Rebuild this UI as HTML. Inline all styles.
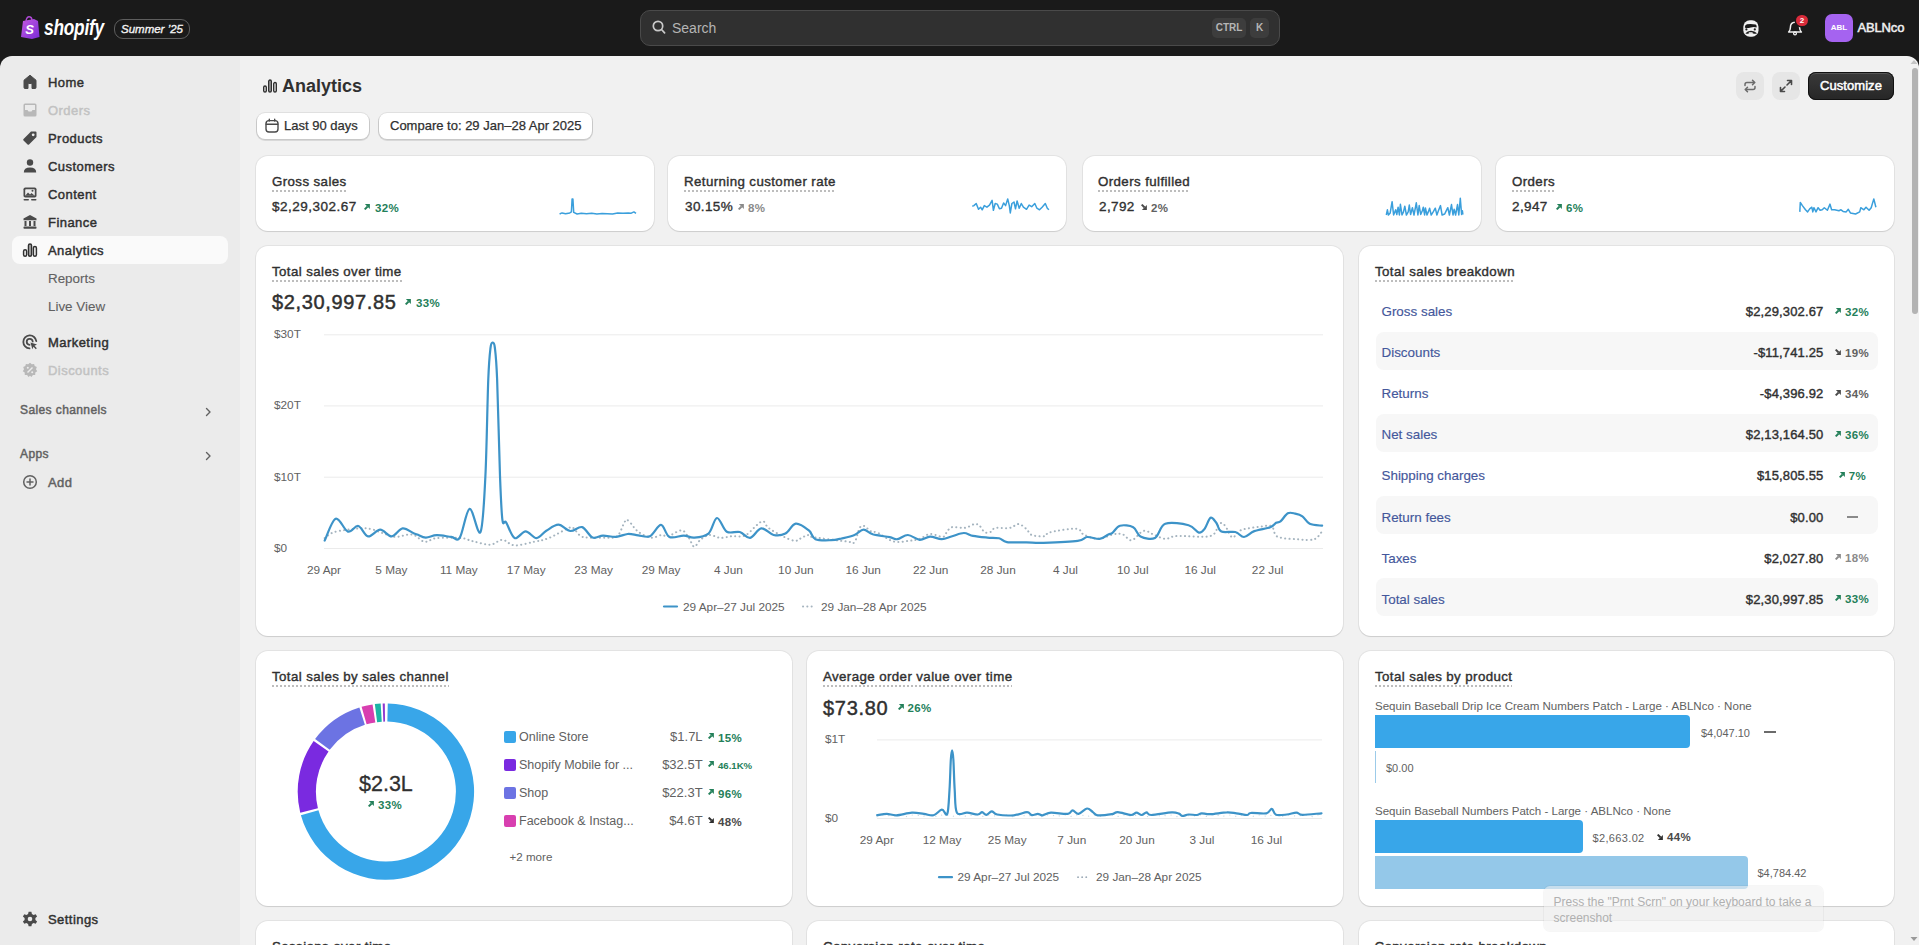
<!DOCTYPE html>
<html><head><meta charset="utf-8">
<style>
*{box-sizing:border-box;margin:0;padding:0}
html,body{width:1919px;height:945px;overflow:hidden;background:#1a1a1a;font-family:"Liberation Sans",sans-serif;color:#303030}
.abs{position:absolute}
.t{position:absolute;white-space:nowrap;line-height:16px}
#top{position:absolute;left:0;top:0;width:1919px;height:56px;background:#1a1a1a}
#side{position:absolute;left:0;top:56px;width:240px;height:889px;background:#ebebeb;border-top-left-radius:12px}
#main{position:absolute;left:240px;top:56px;width:1679px;height:889px;background:#f1f1f1;border-top-right-radius:12px;overflow:hidden}
#pg{position:absolute;left:-240px;top:-56px;width:1919px;height:945px}
.nav{position:absolute;left:12px;width:216px;height:28px;border-radius:8px}
.nav .ic{position:absolute;left:8px;top:4px;width:20px;height:20px}
.nav .tx{position:absolute;left:36px;top:1px;line-height:28px;font-size:13px;color:#303030;-webkit-text-stroke:0.45px currentColor;letter-spacing:0.45px;white-space:nowrap}
.nav.dis .tx{color:#c2c2c2}
.nav.sub .tx{color:#616161;font-size:13.4px;-webkit-text-stroke:0.1px currentColor;letter-spacing:0}
.sel{background:#fafafa}
.card{position:absolute;background:#fff;border-radius:12px;box-shadow:0 0 0 1px rgba(0,0,0,.055),0 1px 1px 0 rgba(0,0,0,.10)}
.ttl{position:absolute;white-space:nowrap;font-size:13.3px;letter-spacing:0.4px;-webkit-text-stroke:0.4px #303030;color:#303030;line-height:16px;background-image:linear-gradient(90deg,#bdbdbd 50%,transparent 50%);background-size:4px 1.5px;background-repeat:repeat-x;background-position:0 15.5px;padding-bottom:3px}
.grn{color:#24805a}
.g6{color:#616161}
.pct{position:absolute;white-space:nowrap;font-size:11.5px;font-weight:bold;line-height:14px;letter-spacing:0.35px}
.ax{position:absolute;white-space:nowrap;font-size:11.8px;color:#616161;line-height:14px}
.axc{position:absolute;white-space:nowrap;font-size:11.8px;color:#616161;line-height:14px;transform:translateX(-50%)}
</style></head><body>
<div id="top">
  <!-- logo -->
  <svg class="abs" style="left:20px;top:16px" width="20" height="23" viewBox="0 0 20 23">
    <defs><linearGradient id="bag" x1="0" y1="0" x2="1" y2="1"><stop offset="0" stop-color="#c45ae0"/><stop offset="1" stop-color="#7a2bd8"/></linearGradient></defs>
    <path d="M3 5 L14 3 L18 5 L19.5 21 L12 23 L1 21 Z" fill="url(#bag)"/>
    <path d="M6 6 C6 2 8 0.5 9.5 0.8 C11 1 12 2.5 12 4.5" stroke="#b14ad8" stroke-width="1.4" fill="none"/>
    <text x="5.2" y="18" font-family="Liberation Sans" font-weight="bold" font-style="italic" font-size="13" fill="#fff">S</text>
  </svg>
  <div class="abs" style="left:43.5px;top:15px;font-size:22.5px;line-height:26px;font-weight:bold;font-style:italic;color:#fff;transform:scaleX(0.77);transform-origin:0 0;letter-spacing:-0.3px">shopify</div>
  <div class="abs" style="left:114px;top:19px;width:76px;height:20px;border:1px solid #5e5e5e;border-radius:9px"></div>
  <div class="abs" style="left:121px;top:21px;font-size:11.5px;font-style:italic;color:#f2f2f2;-webkit-text-stroke:0.35px #f2f2f2;line-height:16px">Summer &#8217;25</div>
  <!-- search -->
  <div class="abs" style="left:640px;top:10px;width:640px;height:36px;background:#303030;border:1px solid #4a4a4a;border-radius:10px"></div>
  <svg class="abs" style="left:652px;top:20px" width="14" height="15" viewBox="0 0 14 15"><circle cx="6" cy="6" r="4.7" stroke="#c9c9c9" stroke-width="1.7" fill="none"/><path d="M9.5 9.5 L12.6 12.8" stroke="#c9c9c9" stroke-width="1.7" stroke-linecap="round"/></svg>
  <div class="abs" style="left:672px;top:20px;font-size:14px;color:#b5b5b5;line-height:16px">Search</div>
  <div class="abs" style="left:1212px;top:18px;width:34px;height:20px;background:#3d3d3d;border-radius:5px;font-size:10px;font-weight:bold;color:#b5b5b5;text-align:center;line-height:20px">CTRL</div>
  <div class="abs" style="left:1250px;top:18px;width:19px;height:20px;background:#3d3d3d;border-radius:5px;font-size:10px;font-weight:bold;color:#b5b5b5;text-align:center;line-height:20px">K</div>
  <!-- right icons -->
  <svg class="abs" style="left:1743px;top:19.5px" width="16" height="17" viewBox="0 0 16 17">
    <rect x="0.3" y="0.3" width="15.2" height="16.4" rx="6.5" fill="#f0f0f0"/>
    <path d="M1.8 7.2 Q2 4.6 4 4.3 Q8 3.4 12.6 4.6 Q14.2 5.4 13.6 7.6 Q11 6.6 8 7.4 Q5 8.2 2.6 8 Z" fill="#1a1a1a"/>
    <circle cx="3.4" cy="9.4" r="1.1" fill="#1a1a1a"/><circle cx="11.8" cy="9.4" r="1.1" fill="#1a1a1a"/>
    <path d="M2.4 13.2 Q4.5 11.2 8 10.8 Q11.5 11.2 14 13.2 Q12 14.2 9.8 13.2 L6.2 13.2 Q4 14.2 2.4 13.2 Z" fill="#1a1a1a"/>
    <rect x="5.6" y="12.2" width="4.2" height="1.6" rx="0.8" fill="#f0f0f0"/>
  </svg>
  <svg class="abs" style="left:1787px;top:20px" width="16" height="16" viewBox="0 0 16 16">
    <path d="M1.6 12 Q3.4 10.6 3.4 7.6 Q3.4 2.2 8 2.2 Q12.6 2.2 12.6 7.6 Q12.6 10.6 14.4 12 Z" fill="none" stroke="#f0f0f0" stroke-width="1.5" stroke-linejoin="round"/>
    <circle cx="8" cy="13.4" r="1.4" fill="none" stroke="#f0f0f0" stroke-width="1.3"/>
  </svg>
  <div class="abs" style="left:1796.2px;top:14.7px;width:11.8px;height:11.8px;border-radius:6px;background:#d92b3a;box-shadow:0 0 0 1.5px #1a1a1a;color:#fff;font-size:8px;font-weight:bold;text-align:center;line-height:12px">2</div>
  <div class="abs" style="left:1825px;top:14px;width:28px;height:28px;border-radius:7px;background:#a563f0;color:#fff;font-size:8px;font-weight:bold;text-align:center;line-height:28px">ABL</div>
  <div class="abs" style="left:1857.5px;top:20px;font-size:13px;color:#f0f0f0;-webkit-text-stroke:0.5px #f0f0f0;line-height:16px;letter-spacing:-0.15px">ABLNco</div>
</div>


<div id="side">
  <div class="nav" style="top:12px"><svg class="ic" viewBox="0 0 20 20"><path d="M10 3.2 L16 8.2 L16 15.5 Q16 16.5 15 16.5 L12 16.5 L12 12.5 Q12 11.5 11 11.5 L9 11.5 Q8 11.5 8 12.5 L8 16.5 L5 16.5 Q4 16.5 4 15.5 L4 8.2 Z" fill="#4a4a4a" stroke="#4a4a4a" stroke-width="1" stroke-linejoin="round"/></svg><div class="tx">Home</div></div>
  <div class="nav dis" style="top:40px"><svg class="ic" viewBox="0 0 20 20"><path d="M5 3.5 L15 3.5 Q16.5 3.5 16.5 5 L16.5 15 Q16.5 16.5 15 16.5 L5 16.5 Q3.5 16.5 3.5 15 L3.5 5 Q3.5 3.5 5 3.5 Z" fill="#b8b8b8"/><path d="M5 5 L15 5 L15 10 L12.5 10 L11.5 11.5 L8.5 11.5 L7.5 10 L5 10 Z" fill="#ebebeb"/></svg><div class="tx">Orders</div></div>
  <div class="nav" style="top:68px"><svg class="ic" viewBox="0 0 20 20"><path d="M11 3.5 L15.5 3.5 Q16.5 3.5 16.5 4.5 L16.5 9 L9 16.5 Q8.3 17.2 7.6 16.5 L3.5 12.4 Q2.8 11.7 3.5 11 Z" fill="#4a4a4a"/><circle cx="13.2" cy="6.8" r="1.4" fill="#ebebeb"/></svg><div class="tx">Products</div></div>
  <div class="nav" style="top:96px"><svg class="ic" viewBox="0 0 20 20"><circle cx="10" cy="6.5" r="3.2" fill="#4a4a4a"/><path d="M3.8 16.5 Q3.8 11.5 10 11.5 Q16.2 11.5 16.2 16.5 Z" fill="#4a4a4a"/></svg><div class="tx">Customers</div></div>
  <div class="nav" style="top:124px"><svg class="ic" viewBox="0 0 20 20"><rect x="3.5" y="3.5" width="13" height="10" rx="1.8" fill="#4a4a4a"/><rect x="5.2" y="5.2" width="9.6" height="6.6" rx=".8" fill="#ebebeb"/><path d="M5.2 11.8 L8 8.5 L10 10.5 L11.5 9 L14.8 11.8 Z" fill="#4a4a4a"/><circle cx="12.5" cy="6.8" r="1" fill="#4a4a4a"/><rect x="3.5" y="15" width="5.5" height="1.6" rx=".8" fill="#4a4a4a"/><rect x="11" y="15" width="5.5" height="1.6" rx=".8" fill="#4a4a4a"/></svg><div class="tx">Content</div></div>
  <div class="nav" style="top:152px"><svg class="ic" viewBox="0 0 20 20"><path d="M10 3 L16.5 6.5 L16.5 8.2 L3.5 8.2 L3.5 6.5 Z" fill="#4a4a4a"/><rect x="4.5" y="9" width="2" height="5" fill="#4a4a4a"/><rect x="9" y="9" width="2" height="5" fill="#4a4a4a"/><rect x="13.5" y="9" width="2" height="5" fill="#4a4a4a"/><rect x="3.5" y="14.5" width="13" height="2.2" rx=".8" fill="#4a4a4a"/></svg><div class="tx">Finance</div></div>
  <div class="nav sel" style="top:180px"><svg class="ic" viewBox="0 0 20 20"><rect x="3.6" y="9.8" width="3" height="6.4" rx="1.5" fill="none" stroke="#303030" stroke-width="1.5"/><rect x="8.5" y="4" width="3" height="12.2" rx="1.5" fill="#bbb" stroke="#303030" stroke-width="1.5"/><rect x="13.4" y="6.6" width="3" height="9.6" rx="1.5" fill="none" stroke="#303030" stroke-width="1.5"/></svg><div class="tx">Analytics</div></div>
  <div class="nav sub" style="top:208px"><div class="tx">Reports</div></div>
  <div class="nav sub" style="top:236px"><div class="tx">Live View</div></div>
  <div class="nav" style="top:272px"><svg class="ic" viewBox="0 0 20 20"><path d="M16.3 9.2 A6.5 6.5 0 1 0 9.5 16.4" fill="none" stroke="#4a4a4a" stroke-width="1.8" stroke-linecap="round"/><path d="M12.7 9.5 A3 3 0 1 0 9.6 12.8" fill="none" stroke="#4a4a4a" stroke-width="1.8" stroke-linecap="round"/><path d="M10.5 10.5 L17 12.6 L14.5 13.8 L16.8 16.2 L15.8 17.2 L13.5 14.8 L12.3 17.2 Z" fill="#4a4a4a"/></svg><div class="tx">Marketing</div></div>
  <div class="nav dis" style="top:300px"><svg class="ic" viewBox="0 0 20 20"><path d="M10 2.8 L11.8 4.3 L14.1 3.9 L14.7 6.1 L16.8 7.1 L16 9.3 L17.2 11.3 L15.3 12.6 L15.2 14.9 L12.9 15.1 L11.5 17 L10 15.8 L8.5 17 L7.1 15.1 L4.8 14.9 L4.7 12.6 L2.8 11.3 L4 9.3 L3.2 7.1 L5.3 6.1 L5.9 3.9 L8.2 4.3 Z" fill="#b8b8b8"/><path d="M7.5 12.5 L12.5 7.5" stroke="#ebebeb" stroke-width="1.4"/><circle cx="7.8" cy="7.8" r="1" fill="#ebebeb"/><circle cx="12.2" cy="12.2" r="1" fill="#ebebeb"/></svg><div class="tx">Discounts</div></div>
  <div class="abs" style="left:20px;top:346px;font-size:12px;color:#616161;-webkit-text-stroke:0.45px #616161;letter-spacing:0.4px;line-height:16px">Sales channels</div>
  <svg class="abs" style="left:202px;top:350px" width="12" height="12" viewBox="0 0 12 12"><path d="M4.5 2.5 L8 6 L4.5 9.5" fill="none" stroke="#616161" stroke-width="1.4" stroke-linecap="round" stroke-linejoin="round"/></svg>
  <div class="abs" style="left:20px;top:390px;font-size:12px;color:#616161;-webkit-text-stroke:0.45px #616161;letter-spacing:0.4px;line-height:16px">Apps</div>
  <svg class="abs" style="left:202px;top:394px" width="12" height="12" viewBox="0 0 12 12"><path d="M4.5 2.5 L8 6 L4.5 9.5" fill="none" stroke="#616161" stroke-width="1.4" stroke-linecap="round" stroke-linejoin="round"/></svg>
  <div class="nav" style="top:412px"><svg class="ic" viewBox="0 0 20 20"><circle cx="10" cy="10" r="6.3" fill="none" stroke="#616161" stroke-width="1.5"/><path d="M10 7 L10 13 M7 10 L13 10" stroke="#616161" stroke-width="1.5" stroke-linecap="round"/></svg><div class="tx" style="color:#616161">Add</div></div>
  <div class="nav" style="top:849px"><svg class="ic" viewBox="0 0 20 20"><path d="M8.6 2.8 L11.4 2.8 L11.9 5 L13.6 6 L15.7 5.2 L17.1 7.6 L15.4 9.1 L15.4 10.9 L17.1 12.4 L15.7 14.8 L13.6 14 L11.9 15 L11.4 17.2 L8.6 17.2 L8.1 15 L6.4 14 L4.3 14.8 L2.9 12.4 L4.6 10.9 L4.6 9.1 L2.9 7.6 L4.3 5.2 L6.4 6 L8.1 5 Z" fill="#4a4a4a"/><circle cx="10" cy="10" r="2.3" fill="#ebebeb"/></svg><div class="tx">Settings</div></div>
</div>


<div id="main"><div id="pg">
<svg class="abs" style="left:262px;top:78px" width="16" height="16" viewBox="0 0 16 16"><rect x="1.7" y="8" width="2.6" height="6" rx="1.3" fill="none" stroke="#303030" stroke-width="1.4"/><rect x="6.7" y="2" width="2.6" height="12" rx="1.3" fill="#bbb" stroke="#303030" stroke-width="1.4"/><rect x="11.7" y="4.5" width="2.6" height="9.5" rx="1.3" fill="none" stroke="#303030" stroke-width="1.4"/></svg>
<div class="t" style="left:282px;top:76px;font-size:18px;font-weight:bold;color:#303030;line-height:20px">Analytics</div>
<div class="abs" style="left:1736px;top:72px;width:28px;height:28px;border-radius:8px;background:#e6e6e6"></div>
<svg class="abs" style="left:1740px;top:76px" width="20" height="20" viewBox="0 0 20 20"><path d="M5 9.5 L5 8.5 Q5 6.5 7 6.5 L14.5 6.5 M12.5 4.3 L14.8 6.5 L12.5 8.7 M15 10.5 L15 11.5 Q15 13.5 13 13.5 L5.5 13.5 M7.5 11.3 L5.2 13.5 L7.5 15.7" fill="none" stroke="#6b6b6b" stroke-width="1.5" stroke-linecap="round" stroke-linejoin="round"/></svg>
<div class="abs" style="left:1772px;top:72px;width:28px;height:28px;border-radius:8px;background:#e6e6e6"></div>
<svg class="abs" style="left:1776px;top:76px" width="20" height="20" viewBox="0 0 20 20"><path d="M11.5 4.5 L15.5 4.5 L15.5 8.5 M15.3 4.7 L11 9 M8.5 15.5 L4.5 15.5 L4.5 11.5 M4.7 15.3 L9 11" fill="none" stroke="#4a4a4a" stroke-width="1.6" stroke-linecap="round" stroke-linejoin="round"/></svg>
<div class="abs" style="left:1808px;top:72px;width:86px;height:28px;border-radius:8px;background:linear-gradient(#3a3a3a,#262626);box-shadow:inset 0 0 0 1px #111, inset 0 2px 0 rgba(255,255,255,.15);color:#fff;font-size:13px;-webkit-text-stroke:0.5px #fff;text-align:center;line-height:28px;letter-spacing:0.05px">Customize</div>
<div class="abs" style="left:257px;top:113px;width:112px;height:26px;border-radius:8px;background:#fff;box-shadow:0 0 0 1px rgba(0,0,0,.07),0 1px 0 1px rgba(0,0,0,.1)"></div>
<svg class="abs" style="left:264px;top:118px" width="16" height="16" viewBox="0 0 16 16"><rect x="2" y="2.6" width="12" height="11.4" rx="3" fill="none" stroke="#4a4a4a" stroke-width="1.4"/><path d="M2.2 6.3 L13.8 6.3 M5.3 1.2 L5.3 3 M10.7 1.2 L10.7 3" stroke="#4a4a4a" stroke-width="1.4" stroke-linecap="round"/></svg>
<div class="t" style="left:284px;top:118px;font-size:13px;color:#303030;-webkit-text-stroke:0.25px #303030">Last 90 days</div>
<div class="abs" style="left:379px;top:113px;width:213px;height:26px;border-radius:8px;background:#fff;box-shadow:0 0 0 1px rgba(0,0,0,.07),0 1px 0 1px rgba(0,0,0,.1)"></div>
<div class="t" style="left:390px;top:118px;font-size:13px;color:#303030;-webkit-text-stroke:0.25px #303030">Compare to: 29 Jan–28 Apr 2025</div>
<div class="card" style="left:256px;top:156px;width:398px;height:74.5px"></div>
<div class="ttl" style="left:272px;top:174px">Gross sales</div>
<div class="card" style="left:668.3px;top:156px;width:398px;height:74.5px"></div>
<div class="ttl" style="left:684px;top:174px">Returning customer rate</div>
<div class="card" style="left:1082.5px;top:156px;width:398px;height:74.5px"></div>
<div class="ttl" style="left:1098px;top:174px">Orders fulfilled</div>
<div class="card" style="left:1495.5px;top:156px;width:398px;height:74.5px"></div>
<div class="ttl" style="left:1512px;top:174px">Orders</div>
<div class="t" style="left:272px;top:199px;font-size:13.5px;letter-spacing:0.5px;color:#303030;-webkit-text-stroke:0.35px #303030">$2,29,302.67</div>
<svg class="abs" style="left:364px;top:204px" width="6" height="6" viewBox="0 0 6 6"><path d="M0.7 5.4 L3.6 2.5" stroke="#24805a" stroke-width="1.9"/><path d="M0.9 0.1 L5.9 0.1 L5.9 5.1 Z" fill="#24805a"/></svg>
<div class="pct grn" style="left:375px;top:201px">32%</div>
<div class="t" style="left:685px;top:199px;font-size:13.5px;letter-spacing:0.4px;color:#303030;-webkit-text-stroke:0.35px #303030">30.15%</div>
<svg class="abs" style="left:738px;top:204px" width="6" height="6" viewBox="0 0 6 6"><path d="M0.7 5.4 L3.6 2.5" stroke="#8a8a8a" stroke-width="1.9"/><path d="M0.9 0.1 L5.9 0.1 L5.9 5.1 Z" fill="#8a8a8a"/></svg>
<div class="pct" style="left:748px;top:201px;color:#8a8a8a">8%</div>
<div class="t" style="left:1099px;top:199px;font-size:13.5px;letter-spacing:0.4px;color:#303030;-webkit-text-stroke:0.35px #303030">2,792</div>
<svg class="abs" style="left:1141px;top:204px" width="6" height="6" viewBox="0 0 6 6"><path d="M0.7 0.6 L3.6 3.5" stroke="#4a4a4a" stroke-width="1.9"/><path d="M5.9 0.9 L5.9 5.9 L0.9 5.9 Z" fill="#4a4a4a"/></svg>
<div class="pct" style="left:1151px;top:201px;color:#616161">2%</div>
<div class="t" style="left:1512px;top:199px;font-size:13.5px;letter-spacing:0.4px;color:#303030;-webkit-text-stroke:0.35px #303030">2,947</div>
<svg class="abs" style="left:1556px;top:204px" width="6" height="6" viewBox="0 0 6 6"><path d="M0.7 5.4 L3.6 2.5" stroke="#24805a" stroke-width="1.9"/><path d="M0.9 0.1 L5.9 0.1 L5.9 5.1 Z" fill="#24805a"/></svg>
<div class="pct grn" style="left:1566px;top:201px">6%</div>
<svg class="abs" style="left:0;top:0" width="1919" height="945" viewBox="0 0 1919 945"><path d="M559.6 214.0 L562.0 212.9 L565.6 213.7 L569.8 212.9 L571.4 211.9 L572.1 198.9 L572.9 198.9 L573.7 212.4 L577.1 214.0 L581.3 213.2 L586.5 213.7 L591.7 213.2 L596.9 214.0 L602.1 213.4 L607.3 213.7 L612.5 214.0 L617.7 212.9 L623.0 213.2 L628.2 212.9 L631.3 213.2 L633.9 211.9 L636.0 213.4" fill="none" stroke="#3a9fdc" stroke-width="1.5" stroke-linejoin="round"/><path d="M972.3 206.2 L973.9 205.6 L976.2 203.5 L978.5 209.3 L980.6 207.2 L982.2 209.8 L984.3 205.6 L986.9 207.2 L989.5 205.1 L992.1 200.4 L993.4 210.3 L995.2 203.5 L997.3 204.1 L999.4 208.8 L1001.5 208.2 L1003.6 203.0 L1005.6 205.6 L1007.7 198.9 L1009.3 205.6 L1010.3 212.9 L1011.9 203.5 L1014.0 202.0 L1015.5 208.8 L1017.1 200.9 L1019.2 208.2 L1021.3 203.5 L1023.4 207.2 L1026.5 209.3 L1029.1 205.1 L1031.7 206.7 L1034.8 203.5 L1036.9 208.2 L1039.5 209.8 L1042.1 207.2 L1045.3 203.5 L1047.3 208.2 L1048.9 209.8" fill="none" stroke="#3a9fdc" stroke-width="1.5" stroke-linejoin="round"/><path d="M1386.3 215.0 L1387.4 209.8 L1388.4 215.0 L1390.2 212.9 L1392.1 201.7 L1393.6 215.0 L1395.7 209.8 L1396.8 214.5 L1398.1 207.2 L1399.4 215.0 L1400.4 204.3 L1402.0 215.0 L1403.5 211.9 L1404.8 206.2 L1406.4 215.0 L1408.2 211.9 L1409.3 205.1 L1410.6 214.5 L1412.4 207.7 L1414.0 215.0 L1416.3 202.8 L1417.9 215.0 L1419.2 205.6 L1420.7 214.5 L1422.3 210.8 L1423.3 207.2 L1424.6 215.0 L1425.4 208.0 L1427.0 215.0 L1428.5 211.4 L1429.6 208.2 L1431.2 215.0 L1433.2 211.9 L1435.3 208.2 L1436.9 215.0 L1438.4 210.8 L1440.5 205.6 L1442.1 215.0 L1444.7 214.0 L1445.7 211.9 L1447.8 207.7 L1449.4 215.0 L1451.5 204.6 L1453.0 215.0 L1454.1 209.3 L1455.6 215.0 L1457.5 204.6 L1458.8 215.0 L1460.3 198.3 L1461.6 214.5 L1462.4 210.8 L1462.9 214.5" fill="none" stroke="#3a9fdc" stroke-width="1.5" stroke-linejoin="round"/><path d="M1799.8 211.9 L1800.3 202.5 L1802.4 205.6 L1805.5 209.8 L1807.6 211.9 L1809.7 208.8 L1811.8 207.2 L1812.8 211.9 L1813.9 207.7 L1816.0 211.9 L1818.1 207.7 L1820.1 210.3 L1822.2 209.8 L1824.3 207.7 L1827.4 210.3 L1830.0 204.1 L1831.6 209.8 L1834.7 209.8 L1838.9 210.8 L1841.0 209.8 L1843.1 211.4 L1846.2 211.9 L1848.3 209.3 L1850.4 212.9 L1855.6 214.0 L1859.7 211.9 L1860.8 207.7 L1863.9 209.8 L1866.0 207.2 L1869.1 210.3 L1871.2 207.7 L1873.8 198.9 L1875.9 207.2" fill="none" stroke="#3a9fdc" stroke-width="1.5" stroke-linejoin="round"/></svg>
<div class="card" style="left:256px;top:245.5px;width:1087px;height:390px"></div>
<div class="ttl" style="left:272px;top:264px">Total sales over time</div>
<div class="t" style="left:272px;top:291px;font-size:20px;letter-spacing:0.65px;-webkit-text-stroke:0.45px #303030;color:#303030;line-height:22px">$2,30,997.85</div>
<svg class="abs" style="left:405px;top:299px" width="6" height="6" viewBox="0 0 6 6"><path d="M0.7 5.4 L3.6 2.5" stroke="#24805a" stroke-width="1.9"/><path d="M0.9 0.1 L5.9 0.1 L5.9 5.1 Z" fill="#24805a"/></svg>
<div class="pct grn" style="left:416px;top:296px">33%</div>
<svg class="abs" style="left:0;top:0" width="1919" height="945" viewBox="0 0 1919 945"><line x1="324" y1="334.8" x2="1323" y2="334.8" stroke="#ebebeb" stroke-width="1"/><line x1="324" y1="405.9" x2="1323" y2="405.9" stroke="#ebebeb" stroke-width="1"/><line x1="324" y1="477.2" x2="1323" y2="477.2" stroke="#ebebeb" stroke-width="1"/><line x1="324" y1="548.5" x2="1323" y2="548.5" stroke="#ebebeb" stroke-width="1"/><path d="M324.7 538.1 C326.3 537.1 328.8 533.6 334.5 532.0 C340.2 530.4 352.7 528.9 358.8 528.4 C364.9 527.9 366.9 528.3 371.0 529.1 C375.1 529.9 379.1 532.0 383.2 533.3 C387.2 534.6 390.4 536.7 395.3 536.9 C400.2 537.1 407.5 533.7 412.4 534.5 C417.3 535.3 420.4 541.2 424.5 541.8 C428.6 542.4 430.6 538.7 436.7 538.1 C442.8 537.5 454.9 537.6 461.0 538.1 C467.1 538.6 468.3 540.2 473.2 541.3 C478.1 542.4 485.4 545.0 490.3 544.7 C495.2 544.5 498.3 539.7 502.4 539.8 C506.4 539.9 509.3 545.1 514.6 545.4 C519.9 545.7 528.4 543.0 534.1 541.8 C539.8 540.6 543.1 540.3 548.7 538.1 C554.3 535.9 563.8 530.1 567.8 528.4 C571.8 526.7 570.8 526.5 573.0 527.8 C575.2 529.1 578.0 534.6 580.8 536.2 C583.6 537.8 585.9 537.4 590.0 537.6 C594.1 537.8 601.1 537.8 605.6 537.6 C610.1 537.4 614.0 538.9 617.3 536.2 C620.5 533.5 623.1 523.8 625.1 521.3 C627.1 518.8 626.8 519.6 629.0 521.3 C631.2 523.0 634.5 529.0 638.2 531.7 C641.9 534.4 647.3 537.1 651.2 537.6 C655.1 538.1 658.8 535.2 661.6 535.0 C664.4 534.8 664.7 537.0 668.1 536.2 C671.5 535.4 678.3 530.1 681.8 530.4 C685.3 530.7 686.9 535.5 689.0 538.2 C691.1 540.9 692.2 546.5 694.2 546.7 C696.2 546.9 698.1 541.5 700.7 539.5 C703.3 537.5 706.5 535.3 709.8 535.0 C713.0 534.7 716.5 537.7 720.2 537.9 C723.9 538.1 727.9 536.6 732.0 536.2 C736.1 535.8 740.9 537.4 745.0 535.6 C749.1 533.8 753.7 527.6 756.7 525.2 C759.7 522.8 761.2 520.9 763.2 521.3 C765.2 521.7 765.4 525.4 768.4 527.8 C771.4 530.2 777.1 533.4 781.5 535.6 C785.9 537.8 791.2 540.4 794.5 540.8 C797.8 541.2 798.8 539.2 801.0 538.2 C803.2 537.2 805.9 535.2 807.6 535.0 C809.4 534.8 805.0 535.8 811.5 536.9 C818.0 538.0 839.5 540.6 846.7 541.5 C853.9 542.4 852.3 544.4 854.5 542.1 C856.7 539.8 858.0 530.4 859.7 527.8 C861.4 525.1 863.2 525.7 864.9 526.2 C866.6 526.7 867.9 529.9 870.1 531.0 C872.3 532.1 874.1 531.2 878.0 533.0 C881.9 534.8 888.4 540.2 893.6 541.5 C898.8 542.8 904.9 541.2 909.2 540.8 C913.5 540.4 916.1 540.0 919.6 538.9 C923.1 537.8 926.2 534.3 930.1 534.0 C934.0 533.7 940.3 537.3 943.1 536.9 C945.9 536.5 945.5 533.3 947.0 531.7 C948.5 530.1 949.2 527.8 952.2 527.1 C955.2 526.5 961.5 528.3 965.2 527.8 C968.9 527.3 972.0 524.4 974.4 524.1 C976.8 523.8 977.9 524.4 979.6 525.8 C981.3 527.2 982.8 531.3 984.8 532.3 C986.8 533.3 989.6 532.4 991.3 531.7 C993.0 531.0 992.2 528.6 995.2 528.0 C998.2 527.4 1005.6 528.6 1009.5 528.0 C1013.4 527.4 1015.8 523.9 1018.6 524.1 C1021.4 524.3 1024.3 527.3 1026.5 529.1 C1028.7 530.9 1028.7 533.8 1031.7 535.0 C1034.7 536.2 1041.7 536.7 1044.7 536.2 C1047.8 535.8 1044.7 533.5 1050.0 532.3 C1055.3 531.0 1070.7 528.3 1076.3 528.7 C1081.9 529.1 1080.0 532.8 1083.6 534.5 C1087.2 536.2 1093.0 539.0 1098.1 538.9 C1103.2 538.8 1110.0 534.8 1114.2 534.1 C1118.4 533.4 1120.1 533.5 1123.0 534.5 C1125.9 535.5 1128.3 540.9 1131.7 540.3 C1135.1 539.7 1139.8 531.9 1143.4 530.9 C1147.1 529.9 1149.9 533.2 1153.6 534.5 C1157.2 535.8 1161.4 538.6 1165.3 538.9 C1169.2 539.1 1169.4 536.5 1176.9 536.0 C1184.4 535.5 1203.5 538.0 1210.5 536.0 C1217.5 534.0 1216.8 525.5 1219.2 523.8 C1221.6 522.1 1222.9 523.4 1225.1 525.7 C1227.3 528.0 1229.7 536.7 1232.4 537.4 C1235.1 538.1 1236.2 531.9 1241.1 530.1 C1246.0 528.3 1256.5 527.1 1261.6 526.5 C1266.7 525.9 1269.1 524.8 1271.8 526.5 C1274.5 528.2 1273.2 534.6 1277.6 536.7 C1282.0 538.8 1291.9 538.9 1298.0 539.3 C1304.1 539.7 1310.2 540.5 1314.1 539.3 C1318.0 538.1 1320.2 533.5 1321.4 532.3" fill="none" stroke="#a5b4bf" stroke-width="2" stroke-dasharray="0.1 4.2" stroke-linecap="round"/><path d="M324.7 540.6 C326.5 537.0 331.8 520.2 335.7 518.7 C339.6 517.2 344.1 530.4 347.9 531.6 C351.7 532.8 354.9 525.2 358.3 526.0 C361.7 526.8 364.5 535.8 368.1 536.4 C371.8 537.0 376.3 529.6 380.2 529.6 C384.1 529.6 388.0 536.6 391.7 536.4 C395.4 536.2 399.0 528.9 402.6 528.4 C406.2 527.9 411.2 532.3 413.6 533.3 C416.0 534.3 415.2 533.8 417.2 534.5 C419.2 535.2 422.6 537.5 425.8 537.6 C429.1 537.7 432.4 535.3 436.7 535.2 C440.9 535.1 447.4 536.5 451.3 536.9 C455.2 537.3 456.8 542.3 459.8 537.6 C462.9 532.9 466.2 509.8 469.6 508.9 C473.1 508.0 477.9 537.5 480.5 532.0 C483.1 526.5 484.1 501.6 485.4 476.0 C486.7 450.4 487.4 400.0 488.3 378.7 C489.2 357.4 489.8 354.0 490.5 348.0 C491.2 342.0 492.0 342.7 492.7 342.7 C493.4 342.7 494.2 342.0 494.9 348.0 C495.6 354.0 496.2 357.4 497.1 378.7 C498.0 400.0 499.1 452.5 500.0 476.0 C500.9 499.5 501.4 512.2 502.4 519.9 C503.4 527.6 504.1 519.3 506.1 522.3 C508.1 525.3 511.4 536.6 514.6 538.1 C517.9 539.6 522.0 531.3 525.6 531.3 C529.2 531.3 533.0 538.2 536.5 538.1 C540.0 538.0 542.6 533.0 546.3 530.8 C549.9 528.6 554.4 524.7 558.4 524.7 C562.4 524.7 566.4 530.6 570.4 531.0 C574.4 531.4 578.4 526.0 582.1 527.1 C585.8 528.2 589.1 536.2 592.6 537.6 C596.1 539.0 599.1 535.7 603.0 535.6 C606.9 535.5 611.9 537.2 616.0 536.9 C620.1 536.6 624.0 534.3 627.7 534.0 C631.4 533.7 634.5 534.9 638.2 535.3 C641.9 535.7 646.1 537.9 649.9 536.2 C653.7 534.5 657.8 524.8 661.0 524.9 C664.2 525.0 665.6 535.1 669.4 536.9 C673.2 538.7 679.7 535.5 683.8 535.6 C687.9 535.7 690.1 537.9 694.2 537.6 C698.3 537.3 704.7 536.9 708.5 533.6 C712.3 530.3 714.0 518.3 717.0 518.0 C720.0 517.7 723.0 529.4 726.8 531.7 C730.6 534.0 735.9 531.0 739.8 532.0 C743.7 533.0 746.6 538.5 750.2 537.9 C753.8 537.3 757.4 528.9 761.3 528.4 C765.2 527.9 769.6 534.1 773.6 535.0 C777.6 535.9 781.7 535.5 785.4 533.6 C789.1 531.7 791.9 524.1 795.8 523.6 C799.7 523.1 805.6 527.8 808.9 530.4 C812.2 533.0 811.7 537.6 815.4 539.2 C819.1 540.8 826.8 540.3 831.1 540.2 C835.5 540.1 837.6 539.4 841.5 538.5 C845.4 537.6 850.8 536.5 854.5 535.0 C858.2 533.5 860.6 529.8 863.6 529.7 C866.6 529.6 868.4 533.0 872.7 534.3 C877.1 535.5 885.6 536.4 889.7 537.2 C893.8 538.0 894.5 539.6 897.5 539.2 C900.5 538.8 904.2 534.9 907.9 535.0 C911.6 535.1 915.9 539.5 919.6 539.8 C923.3 540.1 926.4 536.7 930.1 536.6 C933.8 536.5 938.1 539.3 941.8 539.2 C945.5 539.1 948.5 537.2 952.2 536.2 C955.9 535.2 960.4 533.0 963.9 533.0 C967.4 533.0 969.2 535.1 973.1 535.9 C977.0 536.7 983.1 537.2 987.4 537.6 C991.7 538.0 995.9 537.5 999.1 538.2 C1002.4 539.0 1002.3 541.4 1006.9 542.1 C1011.5 542.8 1020.4 542.3 1026.5 542.4 C1032.6 542.5 1034.9 543.1 1043.4 542.8 C1051.9 542.5 1070.4 541.8 1077.7 540.8 C1085.0 539.8 1083.6 537.3 1087.2 537.0 C1090.8 536.7 1096.1 539.3 1099.6 538.9 C1103.1 538.5 1106.2 535.5 1108.4 534.5 C1110.6 533.5 1110.8 534.1 1112.7 532.6 C1114.6 531.1 1116.6 526.6 1120.0 525.7 C1123.4 524.8 1129.8 525.4 1133.2 527.2 C1136.6 529.0 1136.9 534.6 1140.5 536.4 C1144.1 538.2 1150.9 540.0 1155.0 537.9 C1159.1 535.8 1159.7 525.9 1165.3 523.8 C1170.9 521.7 1183.0 523.8 1188.6 525.3 C1194.2 526.8 1196.1 532.0 1198.8 532.6 C1201.5 533.2 1202.8 531.2 1204.7 528.7 C1206.7 526.2 1208.6 518.7 1210.5 517.7 C1212.4 516.7 1214.5 520.5 1216.3 522.8 C1218.1 525.1 1218.2 530.1 1221.4 531.6 C1224.6 533.1 1231.5 531.1 1235.3 532.0 C1239.1 532.9 1240.8 537.1 1244.0 537.0 C1247.2 536.9 1249.9 532.7 1254.3 531.1 C1258.7 529.5 1266.7 528.6 1270.3 527.2 C1273.9 525.8 1274.4 523.8 1276.1 522.8 C1277.8 521.8 1278.5 523.0 1280.5 521.4 C1282.5 519.8 1285.4 514.6 1287.8 513.3 C1290.2 512.0 1292.7 513.1 1295.1 513.6 C1297.5 514.1 1300.0 514.6 1302.4 516.3 C1304.8 518.0 1306.4 522.2 1309.7 523.8 C1313.0 525.4 1320.0 525.4 1322.1 525.7" fill="none" stroke="#3d93c8" stroke-width="2.2" stroke-linejoin="round" stroke-linecap="round"/><line x1="664" y1="606.5" x2="677" y2="606.5" stroke="#3d93c8" stroke-width="2.2" stroke-linecap="round"/><line x1="803" y1="606.5" x2="814" y2="606.5" stroke="#a5b4bf" stroke-width="2" stroke-dasharray="0.1 4.2" stroke-linecap="round"/></svg>
<div class="ax" style="left:274px;top:327px">$30T</div>
<div class="ax" style="left:274px;top:398.1px">$20T</div>
<div class="ax" style="left:274px;top:470.1px">$10T</div>
<div class="ax" style="left:274px;top:540.8px">$0</div>
<div class="axc" style="left:324.0px;top:563px">29 Apr</div>
<div class="axc" style="left:391.4px;top:563px">5 May</div>
<div class="axc" style="left:458.8px;top:563px">11 May</div>
<div class="axc" style="left:526.2px;top:563px">17 May</div>
<div class="axc" style="left:593.6px;top:563px">23 May</div>
<div class="axc" style="left:661.0px;top:563px">29 May</div>
<div class="axc" style="left:728.4px;top:563px">4 Jun</div>
<div class="axc" style="left:795.8px;top:563px">10 Jun</div>
<div class="axc" style="left:863.2px;top:563px">16 Jun</div>
<div class="axc" style="left:930.6px;top:563px">22 Jun</div>
<div class="axc" style="left:998.0px;top:563px">28 Jun</div>
<div class="axc" style="left:1065.4px;top:563px">4 Jul</div>
<div class="axc" style="left:1132.8px;top:563px">10 Jul</div>
<div class="axc" style="left:1200.2px;top:563px">16 Jul</div>
<div class="axc" style="left:1267.6px;top:563px">22 Jul</div>
<div class="ax" style="left:683px;top:599.5px">29 Apr–27 Jul 2025</div>
<div class="ax" style="left:821px;top:599.5px">29 Jan–28 Apr 2025</div>
<div class="card" style="left:1358.5px;top:245.5px;width:535.5px;height:390px"></div>
<div class="ttl" style="left:1375px;top:264px">Total sales breakdown</div>
<div class="t" style="left:1381.5px;top:304.1px;font-size:13.4px;color:#44579b;-webkit-text-stroke:0.15px #44579b">Gross sales</div>
<div class="t" style="right:95.5px;top:304.1px;font-size:13px;color:#303030;letter-spacing:0.15px;-webkit-text-stroke:0.4px #303030">$2,29,302.67</div>
<svg class="abs" style="left:1835.1px;top:307.6px" width="6" height="6" viewBox="0 0 6 6"><path d="M0.7 5.4 L3.6 2.5" stroke="#24805a" stroke-width="1.9"/><path d="M0.9 0.1 L5.9 0.1 L5.9 5.1 Z" fill="#24805a"/></svg>
<div class="pct" style="left:1845.1px;top:304.6px;color:#24805a">32%</div>
<div class="abs" style="left:1375.5px;top:331.5px;width:502px;height:38px;border-radius:8px;background:#f7f7f7"></div>
<div class="t" style="left:1381.5px;top:345.2px;font-size:13.4px;color:#44579b;-webkit-text-stroke:0.15px #44579b">Discounts</div>
<div class="t" style="right:95.5px;top:345.2px;font-size:13px;color:#303030;letter-spacing:0.15px;-webkit-text-stroke:0.4px #303030">-$11,741.25</div>
<svg class="abs" style="left:1835.1px;top:348.67px" width="6" height="6" viewBox="0 0 6 6"><path d="M0.7 0.6 L3.6 3.5" stroke="#4a4a4a" stroke-width="1.9"/><path d="M5.9 0.9 L5.9 5.9 L0.9 5.9 Z" fill="#4a4a4a"/></svg>
<div class="pct" style="left:1845.1px;top:345.7px;color:#616161">19%</div>
<div class="t" style="left:1381.5px;top:386.2px;font-size:13.4px;color:#44579b;-webkit-text-stroke:0.15px #44579b">Returns</div>
<div class="t" style="right:95.5px;top:386.2px;font-size:13px;color:#303030;letter-spacing:0.15px;-webkit-text-stroke:0.4px #303030">-$4,396.92</div>
<svg class="abs" style="left:1835.1px;top:389.74px" width="6" height="6" viewBox="0 0 6 6"><path d="M0.7 5.4 L3.6 2.5" stroke="#4a4a4a" stroke-width="1.9"/><path d="M0.9 0.1 L5.9 0.1 L5.9 5.1 Z" fill="#4a4a4a"/></svg>
<div class="pct" style="left:1845.1px;top:386.7px;color:#616161">34%</div>
<div class="abs" style="left:1375.5px;top:413.6px;width:502px;height:38px;border-radius:8px;background:#f7f7f7"></div>
<div class="t" style="left:1381.5px;top:427.3px;font-size:13.4px;color:#44579b;-webkit-text-stroke:0.15px #44579b">Net sales</div>
<div class="t" style="right:95.5px;top:427.3px;font-size:13px;color:#303030;letter-spacing:0.15px;-webkit-text-stroke:0.4px #303030">$2,13,164.50</div>
<svg class="abs" style="left:1835.1px;top:430.81000000000006px" width="6" height="6" viewBox="0 0 6 6"><path d="M0.7 5.4 L3.6 2.5" stroke="#24805a" stroke-width="1.9"/><path d="M0.9 0.1 L5.9 0.1 L5.9 5.1 Z" fill="#24805a"/></svg>
<div class="pct" style="left:1845.1px;top:427.8px;color:#24805a">36%</div>
<div class="t" style="left:1381.5px;top:468.4px;font-size:13.4px;color:#44579b;-webkit-text-stroke:0.15px #44579b">Shipping charges</div>
<div class="t" style="right:95.5px;top:468.4px;font-size:13px;color:#303030;letter-spacing:0.15px;-webkit-text-stroke:0.4px #303030">$15,805.55</div>
<svg class="abs" style="left:1838.8px;top:471.88px" width="6" height="6" viewBox="0 0 6 6"><path d="M0.7 5.4 L3.6 2.5" stroke="#24805a" stroke-width="1.9"/><path d="M0.9 0.1 L5.9 0.1 L5.9 5.1 Z" fill="#24805a"/></svg>
<div class="pct" style="left:1848.8px;top:468.9px;color:#24805a">7%</div>
<div class="abs" style="left:1375.5px;top:495.8px;width:502px;height:38px;border-radius:8px;background:#f7f7f7"></div>
<div class="t" style="left:1381.5px;top:509.5px;font-size:13.4px;color:#44579b;-webkit-text-stroke:0.15px #44579b">Return fees</div>
<div class="t" style="right:95.5px;top:509.5px;font-size:13px;color:#303030;letter-spacing:0.15px;-webkit-text-stroke:0.4px #303030">$0.00</div>
<div class="abs" style="left:1847px;top:516.0px;width:11px;height:1.5px;background:#8a8a8a"></div>
<div class="t" style="left:1381.5px;top:550.5px;font-size:13.4px;color:#44579b;-webkit-text-stroke:0.15px #44579b">Taxes</div>
<div class="t" style="right:95.5px;top:550.5px;font-size:13px;color:#303030;letter-spacing:0.15px;-webkit-text-stroke:0.4px #303030">$2,027.80</div>
<svg class="abs" style="left:1835.1px;top:554.02px" width="6" height="6" viewBox="0 0 6 6"><path d="M0.7 5.4 L3.6 2.5" stroke="#8a8a8a" stroke-width="1.9"/><path d="M0.9 0.1 L5.9 0.1 L5.9 5.1 Z" fill="#8a8a8a"/></svg>
<div class="pct" style="left:1845.1px;top:551.0px;color:#8a8a8a">18%</div>
<div class="abs" style="left:1375.5px;top:577.9px;width:502px;height:38px;border-radius:8px;background:#f7f7f7"></div>
<div class="t" style="left:1381.5px;top:591.6px;font-size:13.4px;color:#44579b;-webkit-text-stroke:0.15px #44579b">Total sales</div>
<div class="t" style="right:95.5px;top:591.6px;font-size:13px;color:#303030;letter-spacing:0.15px;-webkit-text-stroke:0.4px #303030">$2,30,997.85</div>
<svg class="abs" style="left:1835.1px;top:595.09px" width="6" height="6" viewBox="0 0 6 6"><path d="M0.7 5.4 L3.6 2.5" stroke="#24805a" stroke-width="1.9"/><path d="M0.9 0.1 L5.9 0.1 L5.9 5.1 Z" fill="#24805a"/></svg>
<div class="pct" style="left:1845.1px;top:592.1px;color:#24805a">33%</div>
<div class="card" style="left:256px;top:650.5px;width:535.5px;height:255px"></div>
<div class="ttl" style="left:272px;top:669px">Total sales by sales channel</div>
<svg class="abs" style="left:0;top:0" width="1919" height="945" viewBox="0 0 1919 945"><path d="M387.75 703.42 A88.2 88.2 0 1 1 300.91 815.17 L318.45 810.31 A70 70 0 1 0 387.37 721.62 Z" fill="#38a6e9"/><path d="M300.25 812.64 A88.2 88.2 0 0 1 313.65 741.01 L328.56 751.45 A70 70 0 0 0 317.92 808.30 Z" fill="#7a2ae0"/><path d="M315.09 739.01 A88.2 88.2 0 0 1 359.38 707.48 L364.85 724.84 A70 70 0 0 0 329.70 749.86 Z" fill="#6c73e3"/><path d="M361.59 706.82 A88.2 88.2 0 0 1 372.56 704.41 L375.31 722.41 A70 70 0 0 0 366.61 724.31 Z" fill="#d83fb0"/><path d="M374.85 704.10 A88.2 88.2 0 0 1 380.67 703.56 L381.75 721.72 A70 70 0 0 0 377.13 722.15 Z" fill="#1cb5a6"/><path d="M382.67 703.46 A88.2 88.2 0 0 1 384.82 703.41 L385.04 721.61 A70 70 0 0 0 383.33 721.65 Z" fill="#8e3ad0"/></svg>
<div class="t" style="left:359px;top:773px;font-size:21.5px;color:#303030;line-height:22px;-webkit-text-stroke:0.3px #303030">$2.3L</div>
<svg class="abs" style="left:367.5px;top:801px" width="6" height="6" viewBox="0 0 6 6"><path d="M0.7 5.4 L3.6 2.5" stroke="#24805a" stroke-width="1.9"/><path d="M0.9 0.1 L5.9 0.1 L5.9 5.1 Z" fill="#24805a"/></svg>
<div class="pct grn" style="left:378px;top:798px">33%</div>
<div class="abs" style="left:504px;top:730.8px;width:12px;height:12px;border-radius:2px;background:#38a6e9"></div>
<div class="t" style="left:519px;top:728.8px;font-size:12.5px;color:#616161">Online Store</div>
<div class="t" style="right:1216.4px;top:728.8px;font-size:13px;color:#616161">$1.7L</div>
<svg class="abs" style="left:708px;top:733.3px" width="6" height="6" viewBox="0 0 6 6"><path d="M0.7 5.4 L3.6 2.5" stroke="#24805a" stroke-width="1.9"/><path d="M0.9 0.1 L5.9 0.1 L5.9 5.1 Z" fill="#24805a"/></svg>
<div class="pct grn" style="left:718px;top:730.8px;font-size:11.5px">15%</div>
<div class="abs" style="left:504px;top:758.8px;width:12px;height:12px;border-radius:2px;background:#7a2ae0"></div>
<div class="t" style="left:519px;top:756.8px;font-size:12.5px;color:#616161">Shopify Mobile for ...</div>
<div class="t" style="right:1216.4px;top:756.8px;font-size:13px;color:#616161">$32.5T</div>
<svg class="abs" style="left:708px;top:761.3px" width="6" height="6" viewBox="0 0 6 6"><path d="M0.7 5.4 L3.6 2.5" stroke="#24805a" stroke-width="1.9"/><path d="M0.9 0.1 L5.9 0.1 L5.9 5.1 Z" fill="#24805a"/></svg>
<div class="pct grn" style="left:718px;top:758.8px;font-size:9.6px;letter-spacing:0">46.1K%</div>
<div class="abs" style="left:504px;top:786.8px;width:12px;height:12px;border-radius:2px;background:#6c73e3"></div>
<div class="t" style="left:519px;top:784.8px;font-size:12.5px;color:#616161">Shop</div>
<div class="t" style="right:1216.4px;top:784.8px;font-size:13px;color:#616161">$22.3T</div>
<svg class="abs" style="left:708px;top:789.3px" width="6" height="6" viewBox="0 0 6 6"><path d="M0.7 5.4 L3.6 2.5" stroke="#24805a" stroke-width="1.9"/><path d="M0.9 0.1 L5.9 0.1 L5.9 5.1 Z" fill="#24805a"/></svg>
<div class="pct grn" style="left:718px;top:786.8px;font-size:11.5px">96%</div>
<div class="abs" style="left:504px;top:814.8px;width:12px;height:12px;border-radius:2px;background:#d83fb0"></div>
<div class="t" style="left:519px;top:812.8px;font-size:12.5px;color:#616161">Facebook &amp; Instag...</div>
<div class="t" style="right:1216.4px;top:812.8px;font-size:13px;color:#616161">$4.6T</div>
<svg class="abs" style="left:708px;top:817.3px" width="6" height="6" viewBox="0 0 6 6"><path d="M0.7 0.6 L3.6 3.5" stroke="#303030" stroke-width="1.9"/><path d="M5.9 0.9 L5.9 5.9 L0.9 5.9 Z" fill="#303030"/></svg>
<div class="pct" style="left:718px;top:814.8px;color:#4a4a4a">48%</div>
<div class="t" style="left:509.5px;top:848.5px;font-size:11.6px;color:#616161">+2 more</div>
<div class="card" style="left:807px;top:650.5px;width:536px;height:255px"></div>
<div class="ttl" style="left:823px;top:669px">Average order value over time</div>
<div class="t" style="left:823px;top:697px;font-size:20px;letter-spacing:0.7px;-webkit-text-stroke:0.45px #303030;color:#303030;line-height:22px">$73.80</div>
<svg class="abs" style="left:897.5px;top:704px" width="6" height="6" viewBox="0 0 6 6"><path d="M0.7 5.4 L3.6 2.5" stroke="#24805a" stroke-width="1.9"/><path d="M0.9 0.1 L5.9 0.1 L5.9 5.1 Z" fill="#24805a"/></svg>
<div class="pct grn" style="left:907.5px;top:701px">26%</div>
<svg class="abs" style="left:0;top:0" width="1919" height="945" viewBox="0 0 1919 945"><line x1="877" y1="739.9" x2="1322" y2="739.9" stroke="#ebebeb" stroke-width="1"/><line x1="877" y1="818.5" x2="1322" y2="818.5" stroke="#ebebeb" stroke-width="1"/><path d="M877.0 816.7 L882.0 815.0 L887.0 815.0 L892.0 816.7 L897.0 815.0 L902.0 815.0 L907.0 816.7 L912.0 815.0 L917.0 815.0 L922.0 816.7 L927.0 815.0 L932.0 815.0 L937.0 816.7 L942.0 815.0 L947.0 815.0 L952.0 816.7 L957.0 815.0 L962.0 815.0 L967.0 816.7 L972.0 815.0 L977.0 815.0 L982.0 816.7 L987.0 815.0 L992.0 815.0 L997.0 816.7 L1002.0 815.0 L1007.0 815.0 L1012.0 816.7 L1017.0 815.0 L1022.0 815.0 L1027.0 816.7 L1032.0 815.0 L1037.0 815.0 L1042.0 816.7 L1047.0 815.0 L1052.0 815.0 L1057.0 816.7 L1062.0 815.0 L1067.0 815.0 L1072.0 816.7 L1077.0 815.0 L1082.0 815.0 L1087.0 816.7 L1092.0 815.0 L1097.0 815.0 L1102.0 816.7 L1107.0 815.0 L1112.0 815.0 L1117.0 816.7 L1122.0 815.0 L1127.0 815.0 L1132.0 816.7 L1137.0 815.0 L1142.0 815.0 L1147.0 816.7 L1152.0 815.0 L1157.0 815.0 L1162.0 816.7 L1167.0 815.0 L1172.0 815.0 L1177.0 816.7 L1182.0 815.0 L1187.0 815.0 L1192.0 816.7 L1197.0 815.0 L1202.0 815.0 L1207.0 816.7 L1212.0 815.0 L1217.0 815.0 L1222.0 816.7 L1227.0 815.0 L1232.0 815.0 L1237.0 816.7 L1242.0 815.0 L1247.0 815.0 L1252.0 816.7 L1257.0 815.0 L1262.0 815.0 L1267.0 816.7 L1272.0 815.0 L1277.0 815.0 L1282.0 816.7 L1287.0 815.0 L1292.0 815.0 L1297.0 816.7 L1302.0 815.0 L1307.0 815.0 L1312.0 816.7 L1317.0 815.0 L1322.0 815.0" fill="none" stroke="#c5d5df" stroke-width="1.2" stroke-dasharray="0.1 6" stroke-linecap="round"/><path d="M877.2 815.1 C878.8 814.9 883.6 813.9 886.8 813.9 C890.0 813.9 892.2 815.5 896.4 815.3 C900.6 815.1 907.4 812.9 912.0 812.7 C916.6 812.5 920.3 813.5 923.9 813.9 C927.5 814.3 930.5 816.0 933.5 815.3 C936.5 814.6 939.6 809.9 941.9 809.7 C944.2 809.5 946.0 817.2 947.3 813.9 C948.6 810.6 948.9 799.0 949.5 790.0 C950.1 781.0 950.4 766.6 950.8 760.0 C951.2 753.4 951.7 750.4 952.1 750.4 C952.5 750.4 953.0 753.4 953.4 760.0 C953.8 766.6 954.1 781.2 954.7 790.0 C955.3 798.8 954.8 808.9 956.9 812.7 C959.0 816.5 963.6 812.4 967.1 812.7 C970.6 813.0 975.4 814.6 977.9 814.5 C980.4 814.4 980.7 812.0 982.1 812.1 C983.5 812.2 984.7 815.0 986.3 814.9 C987.9 814.8 989.9 811.4 991.7 811.3 C993.5 811.2 993.4 813.8 997.1 814.5 C1000.8 815.2 1008.8 815.7 1013.8 815.3 C1018.8 814.9 1024.0 812.1 1027.0 812.1 C1030.0 812.1 1030.0 814.8 1031.8 815.1 C1033.6 815.4 1036.0 813.9 1037.8 813.9 C1039.6 813.9 1040.4 815.5 1042.6 815.3 C1044.8 815.1 1046.8 812.9 1051.0 812.7 C1055.2 812.5 1064.2 814.3 1067.8 813.9 C1071.4 813.5 1070.8 810.3 1072.6 810.3 C1074.4 810.3 1076.2 814.2 1078.6 813.9 C1081.0 813.6 1084.6 808.8 1087.0 808.5 C1089.4 808.2 1091.1 811.0 1092.9 812.1 C1094.7 813.2 1094.6 814.9 1097.7 815.3 C1100.8 815.6 1108.5 814.7 1111.8 814.2 C1115.1 813.7 1114.6 812.0 1117.8 812.1 C1121.0 812.2 1127.9 814.9 1131.0 815.0 C1134.1 815.1 1134.6 812.6 1136.4 812.6 C1138.2 812.6 1140.0 815.0 1141.7 815.0 C1143.4 815.0 1144.9 812.4 1146.5 812.4 C1148.1 812.4 1147.1 815.0 1151.3 815.0 C1155.5 815.0 1167.1 812.6 1171.7 812.4 C1176.3 812.2 1177.1 813.0 1178.9 813.6 C1180.7 814.2 1180.9 815.9 1182.5 816.0 C1184.1 816.1 1186.1 814.7 1188.5 814.5 C1190.9 814.3 1194.7 815.2 1196.9 815.0 C1199.1 814.8 1199.5 813.4 1201.7 813.3 C1203.9 813.2 1205.9 814.4 1210.1 814.2 C1214.3 814.1 1222.4 812.5 1226.8 812.4 C1231.2 812.2 1233.0 812.9 1236.4 813.3 C1239.8 813.7 1244.8 815.0 1247.2 815.0 C1249.6 815.0 1247.6 813.3 1250.8 813.0 C1254.0 812.7 1262.9 814.0 1266.4 813.3 C1269.9 812.6 1270.2 808.5 1271.8 808.8 C1273.4 809.0 1273.5 813.8 1276.0 814.8 C1278.5 815.8 1283.4 814.9 1286.8 814.5 C1290.2 814.1 1293.8 812.6 1296.4 812.6 C1299.0 812.6 1298.2 814.7 1302.4 814.8 C1306.6 814.9 1318.3 813.5 1321.5 813.3" fill="none" stroke="#3d93c8" stroke-width="2.2" stroke-linejoin="round" stroke-linecap="round"/><line x1="939" y1="877.2" x2="952" y2="877.2" stroke="#3d93c8" stroke-width="2.2" stroke-linecap="round"/><line x1="1078" y1="877.2" x2="1089" y2="877.2" stroke="#9eacb8" stroke-width="1.8" stroke-dasharray="0.1 4" stroke-linecap="round"/></svg>
<div class="ax" style="left:825px;top:731.5px">$1T</div>
<div class="ax" style="left:825px;top:810.5px">$0</div>
<div class="axc" style="left:876.8px;top:833px">29 Apr</div>
<div class="axc" style="left:942px;top:833px">12 May</div>
<div class="axc" style="left:1007.2px;top:833px">25 May</div>
<div class="axc" style="left:1071.8px;top:833px">7 Jun</div>
<div class="axc" style="left:1137px;top:833px">20 Jun</div>
<div class="axc" style="left:1201.9px;top:833px">3 Jul</div>
<div class="axc" style="left:1266.4px;top:833px">16 Jul</div>
<div class="ax" style="left:957.5px;top:870px">29 Apr–27 Jul 2025</div>
<div class="ax" style="left:1096px;top:870px">29 Jan–28 Apr 2025</div>
<div class="card" style="left:1358.5px;top:650.5px;width:535.5px;height:255px"></div>
<div class="ttl" style="left:1375px;top:669px">Total sales by product</div>
<div class="t" style="left:1375px;top:697.5px;font-size:11.55px;color:#616161">Sequin Baseball Drip Ice Cream Numbers Patch - Large · ABLNco · None</div>
<div class="abs" style="left:1375px;top:715.2px;width:315px;height:33px;background:#38a6e9;border-radius:0 4px 4px 0"></div>
<div class="t" style="left:1701px;top:724.5px;font-size:11px;color:#616161">$4,047.10</div>
<div class="abs" style="left:1764px;top:731px;width:12px;height:1.5px;background:#6b6b6b"></div>
<div class="abs" style="left:1375px;top:751.4px;width:1.2px;height:32px;background:#9ccbe9"></div>
<div class="t" style="left:1386px;top:759.5px;font-size:11px;color:#616161">$0.00</div>
<div class="t" style="left:1375px;top:802.5px;font-size:11.55px;color:#616161">Sequin Baseball Numbers Patch - Large · ABLNco · None</div>
<div class="abs" style="left:1375px;top:820.1px;width:207.5px;height:33px;background:#38a6e9;border-radius:0 4px 4px 0"></div>
<div class="t" style="left:1592.5px;top:829.5px;font-size:11px;letter-spacing:0.35px;color:#616161">$2,663.02</div>
<svg class="abs" style="left:1657px;top:833.5px" width="6" height="6" viewBox="0 0 6 6"><path d="M0.7 0.6 L3.6 3.5" stroke="#303030" stroke-width="1.9"/><path d="M5.9 0.9 L5.9 5.9 L0.9 5.9 Z" fill="#303030"/></svg>
<div class="pct" style="left:1667px;top:830px;color:#4a4a4a">44%</div>
<div class="abs" style="left:1375px;top:855.6px;width:372.7px;height:33px;background:#94c8e9;border-radius:0 4px 4px 0"></div>
<div class="t" style="left:1757.5px;top:864.5px;font-size:11px;color:#616161">$4,784.42</div>
<div class="card" style="left:256px;top:920.5px;width:535.5px;height:200px"></div>
<div class="ttl" style="left:272px;top:939px">Sessions over time</div>
<div class="card" style="left:807px;top:920.5px;width:536px;height:200px"></div>
<div class="ttl" style="left:823px;top:939px">Conversion rate over time</div>
<div class="card" style="left:1358.5px;top:920.5px;width:535.5px;height:200px"></div>
<div class="ttl" style="left:1374.5px;top:939px">Conversion rate breakdown</div>
<div class="abs" style="left:1544px;top:886px;width:279px;height:45px;border-radius:6px;background:rgba(240,240,240,.55);box-shadow:0 0 0 1px rgba(0,0,0,.035)"></div>
<div class="t" style="left:1553.5px;top:893.5px;font-size:12px;color:#b0b0b0;line-height:16px">Press the "Prnt Scrn" on your keyboard to take a<br>screenshot</div>
<div class="abs" style="left:1911.5px;top:67.5px;width:6.5px;height:246px;border-radius:4px;background:#b3b3b3"></div>
<svg class="abs" style="left:1909px;top:58px" width="10" height="8" viewBox="0 0 10 8"><path d="M1.5 6 L5 2 L8.5 6 Z" fill="#c4c4c4"/></svg>
<svg class="abs" style="left:1909px;top:935px" width="10" height="8" viewBox="0 0 10 8"><path d="M1.5 2 L5 6 L8.5 2 Z" fill="#9a9a9a"/></svg>
</div></div>
</body></html>
